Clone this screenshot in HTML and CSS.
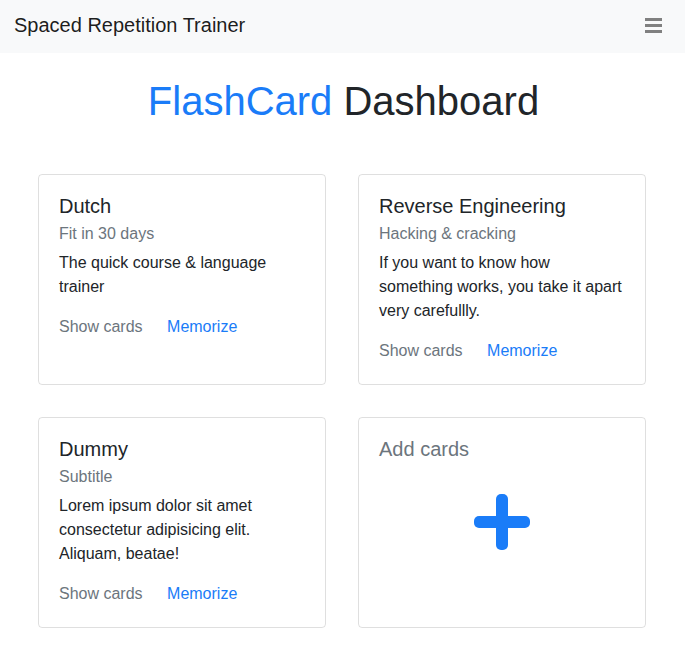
FILE: index.html
```html
<!DOCTYPE html>
<html lang="en">
<head>
<meta charset="utf-8">
<title>Spaced Repetition Trainer</title>
<link rel="stylesheet" href="styles.css">
</head>
<body>
<nav class="navbar">
  <span class="brand">Spaced Repetition Trainer</span>
  <button class="toggler" aria-label="Menu">
    <svg width="17" height="15" viewBox="0 0 17 15"><rect x="0" y="0" width="17" height="3" fill="#808080"/><rect x="0" y="6" width="17" height="3" fill="#808080"/><rect x="0" y="12" width="17" height="3" fill="#808080"/></svg>
  </button>
</nav>
<h1 class="page-title"><span class="accent">FlashCard</span> Dashboard</h1>
<main class="deck-grid">
  <section class="card">
    <h5 class="card-title">Dutch</h5>
    <h6 class="card-subtitle">Fit in 30 days</h6>
    <p class="card-text">The quick course &amp; language trainer</p>
    <div class="card-links"><a class="card-link muted" href="#">Show cards</a> <a class="card-link" href="#">Memorize</a></div>
  </section>
  <section class="card">
    <h5 class="card-title">Reverse Engineering</h5>
    <h6 class="card-subtitle">Hacking &amp; cracking</h6>
    <p class="card-text">If you want to know how something works, you take it apart very carefullly.</p>
    <div class="card-links"><a class="card-link muted" href="#">Show cards</a> <a class="card-link" href="#">Memorize</a></div>
  </section>
  <section class="card">
    <h5 class="card-title">Dummy</h5>
    <h6 class="card-subtitle">Subtitle</h6>
    <p class="card-text">Lorem ipsum dolor sit amet consectetur adipisicing elit. Aliquam, beatae!</p>
    <div class="card-links"><a class="card-link muted" href="#">Show cards</a> <a class="card-link" href="#">Memorize</a></div>
  </section>
  <section class="card">
    <h5 class="card-title muted">Add cards</h5>
    <div class="add-icon">
      <svg width="56" height="56" viewBox="0 0 56 56"><rect x="22" y="0" width="12" height="56" rx="5" fill="#1a7cf8"/><rect x="0" y="22" width="56" height="12" rx="5" fill="#1a7cf8"/></svg>
    </div>
  </section>
</main>
</body>
</html>
```
FILE: styles.css
```css
* { box-sizing: border-box; }
html, body { margin: 0; padding: 0; }
body {
  font-family: "Liberation Sans", Arial, sans-serif;
  font-size: 16px;
  line-height: 1.5;
  color: #212529;
  background: #fff;
}
.navbar {
  height: 53px;
  background: #f8f9fa;
  display: flex;
  align-items: center;
  justify-content: space-between;
  padding: 0 23px 4px 14px;
}
.brand {
  font-size: 20px;
  line-height: 24px;
  color: rgba(0,0,0,.9);
}
.toggler {
  border: 0;
  background: none;
  padding: 0;
  display: flex;
  margin-top: 1px;
}
.page-title {
  margin: 24px 0 49px;
  padding-left: 2px;
  text-align: center;
  font-size: 40px;
  line-height: 48px;
  font-weight: normal;
  color: #212529;
}
.accent { color: #1a7cf8; }
.deck-grid {
  display: grid;
  grid-template-columns: 288px 288px;
  column-gap: 32px;
  row-gap: 32px;
  justify-content: start;
  padding: 0 0 20px 38px;
}
.card {
  border: 1px solid rgba(0,0,0,.125);
  border-radius: 4px;
  padding: 19px 20px 21px;
}
.card-title {
  margin: 0 0 12px;
  font-size: 20px;
  line-height: 24px;
  font-weight: normal;
}
.card-subtitle {
  margin: -6px 0 8px;
  font-size: 16px;
  line-height: 19.2px;
  font-weight: normal;
  color: #6c757d;
}
.card-text {
  margin: 0 0 16px;
}
.muted { color: #6c757d; }
.card-link {
  color: #1a7cf8;
  text-decoration: none;
}
.card-link + .card-link { margin-left: 20px; }
.card-link.muted { color: #6c757d; }
.add-icon {
  display: flex;
  justify-content: center;
  margin-top: 33px;
}
```
